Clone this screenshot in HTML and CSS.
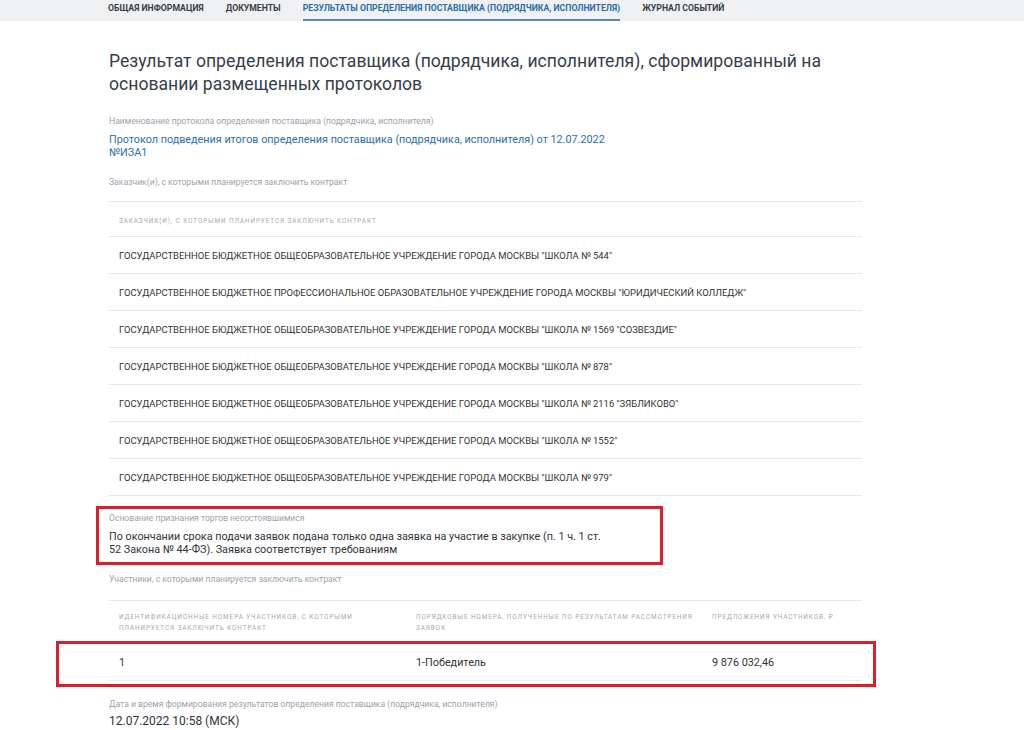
FILE: index.html
```html
<!DOCTYPE html>
<html lang="ru">
<head>
<meta charset="utf-8">
<title>Результат определения поставщика</title>
<link rel="stylesheet" href="styles.css">
</head>
<body>
<nav class="tabs">
  <a class="tab">ОБЩАЯ ИНФОРМАЦИЯ</a>
  <a class="tab">ДОКУМЕНТЫ</a>
  <a class="tab active">РЕЗУЛЬТАТЫ ОПРЕДЕЛЕНИЯ ПОСТАВЩИКА (ПОДРЯДЧИКА, ИСПОЛНИТЕЛЯ)</a>
  <a class="tab">ЖУРНАЛ СОБЫТИЙ</a>
</nav>
<main class="content">
  <h1 class="title">Результат определения поставщика (подрядчика, исполнителя), сформированный на основании размещенных протоколов</h1>

  <div class="label first">Наименование протокола определения поставщика (подрядчика, исполнителя)</div>
  <div class="link">Протокол подведения итогов определения поставщика (подрядчика, исполнителя) от 12.07.2022<br>№ИЗА1</div>

  <div class="label second">Заказчик(и), с которыми планируется заключить контракт</div>
  <div class="table customers">
    <div class="thead">ЗАКАЗЧИК(И), С КОТОРЫМИ ПЛАНИРУЕТСЯ ЗАКЛЮЧИТЬ КОНТРАКТ</div>
    <div class="row">ГОСУДАРСТВЕННОЕ БЮДЖЕТНОЕ ОБЩЕОБРАЗОВАТЕЛЬНОЕ УЧРЕЖДЕНИЕ ГОРОДА МОСКВЫ "ШКОЛА № 544"</div>
    <div class="row">ГОСУДАРСТВЕННОЕ БЮДЖЕТНОЕ ПРОФЕССИОНАЛЬНОЕ ОБРАЗОВАТЕЛЬНОЕ УЧРЕЖДЕНИЕ ГОРОДА МОСКВЫ "ЮРИДИЧЕСКИЙ КОЛЛЕДЖ"</div>
    <div class="row">ГОСУДАРСТВЕННОЕ БЮДЖЕТНОЕ ОБЩЕОБРАЗОВАТЕЛЬНОЕ УЧРЕЖДЕНИЕ ГОРОДА МОСКВЫ "ШКОЛА № 1569 "СОЗВЕЗДИЕ"</div>
    <div class="row">ГОСУДАРСТВЕННОЕ БЮДЖЕТНОЕ ОБЩЕОБРАЗОВАТЕЛЬНОЕ УЧРЕЖДЕНИЕ ГОРОДА МОСКВЫ "ШКОЛА № 878"</div>
    <div class="row">ГОСУДАРСТВЕННОЕ БЮДЖЕТНОЕ ОБЩЕОБРАЗОВАТЕЛЬНОЕ УЧРЕЖДЕНИЕ ГОРОДА МОСКВЫ "ШКОЛА № 2116 "ЗЯБЛИКОВО"</div>
    <div class="row">ГОСУДАРСТВЕННОЕ БЮДЖЕТНОЕ ОБЩЕОБРАЗОВАТЕЛЬНОЕ УЧРЕЖДЕНИЕ ГОРОДА МОСКВЫ "ШКОЛА № 1552"</div>
    <div class="row">ГОСУДАРСТВЕННОЕ БЮДЖЕТНОЕ ОБЩЕОБРАЗОВАТЕЛЬНОЕ УЧРЕЖДЕНИЕ ГОРОДА МОСКВЫ "ШКОЛА № 979"</div>
  </div>

  <div class="reason-box">
    <div class="label">Основание признания торгов несостоявшимися</div>
    <div class="reason">По окончании срока подачи заявок подана только одна заявка на участие в закупке (п. 1 ч. 1 ст.<br>52 Закона № 44-ФЗ). Заявка соответствует требованиям</div>
  </div>

  <div class="label third">Участники, с которыми планируется заключить контракт</div>
  <div class="table participants">
    <div class="thead grid3">
      <div class="cell">ИДЕНТИФИКАЦИОННЫЕ НОМЕРА УЧАСТНИКОВ, С КОТОРЫМИ ПЛАНИРУЕТСЯ ЗАКЛЮЧИТЬ КОНТРАКТ</div>
      <div class="cell">ПОРЯДКОВЫЕ НОМЕРА, ПОЛУЧЕННЫЕ ПО РЕЗУЛЬТАТАМ РАССМОТРЕНИЯ ЗАЯВОК</div>
      <div class="cell">ПРЕДЛОЖЕНИЯ УЧАСТНИКОВ, ₽</div>
    </div>
    <div class="winner-box">
      <div class="row grid3">
        <div class="cell">1</div>
        <div class="cell">1-Победитель</div>
        <div class="cell">9 876 032,46</div>
      </div>
    </div>
  </div>

  <div class="label fourth">Дата и время формирования результатов определения поставщика (подрядчика, исполнителя)</div>
  <div class="date">12.07.2022 10:58 (МСК)</div>
</main>
</body>
</html>
```

FILE: styles.css
```css
* { box-sizing: border-box; }
html, body { margin: 0; padding: 0; background: #fff; }
body {
  font-family: Roboto, "Noto Sans", "Liberation Sans", sans-serif;
  color: #333;
  width: 1024px;
  height: 730px;
  overflow: hidden;
}

.tabs {
  display: flex;
  gap: 22px;
  height: 21px;
  padding-left: 108px;
  background: #eff1f3;
}
.tab {
  font-size: 8.7px;
  font-weight: 700;
  color: #3a3f45;
  line-height: 17px;
  height: 21px;
  white-space: nowrap;
}
.tab.active {
  color: #2c6fa6;
  border-bottom: 2px solid #5a89aa;
}

.content {
  padding-left: 109px;
  width: 862px;
}

.title {
  margin: 29px 0 0 0;
  font-size: 17.6px;
  font-weight: 400;
  line-height: 23px;
  color: #353e4b;
  width: 740px;
}

.label {
  font-size: 8.6px;
  line-height: 12px;
  color: #9ba3ab;
  white-space: nowrap;
}
.label.first { margin-top: 19px; }
.label.second { margin-top: 17px; }
.label.third { margin-top: 8px; }
.label.fourth { margin-top: 11px; }

.link {
  margin-top: 6px;
  font-size: 10.8px;
  line-height: 13px;
  color: #2a70aa;
}

.table {
  margin-top: 13px;
  border-top: 1px solid #e6e9ec;
}
.thead {
  font-size: 6.4px;
  letter-spacing: 0.9px;
  color: #a3aab1;
  line-height: 11px;
}
.customers .thead {
  height: 35px;
  padding: 14px 0 0 10px;
  border-bottom: 1px solid #e6e9ec;
}
.customers .row {
  height: 37px;
  padding-left: 10px;
  display: flex;
  align-items: center;
  font-size: 9.45px;
  color: #333;
  border-bottom: 1px solid #e6e9ec;
  white-space: nowrap;
}

.reason-box {
  margin: 10px 0 0 -13px;
  width: 567px;
  border: 3px solid #d7202c;
  padding: 3px 0 6px 10px;
}
.reason {
  margin-top: 6px;
  font-size: 10.8px;
  line-height: 13px;
  color: #2f343a;
}

.participants {
  margin-top: 15px;
}
.grid3 {
  display: grid;
  grid-template-columns: 297px 296px 1fr;
}
.grid3 .cell { padding-left: 10px; }
.participants .thead {
  height: 40px;
  padding-top: 11px;
}
.winner-box {
  margin: 0 -14px 0 -53px;
  border: 3px solid #d7202c;
  padding: 0 11px 3px 50px;
}
.participants .row {
  height: 37px;
  align-items: center;
  font-size: 10.8px;
  color: #333;
  border-bottom: 1px solid #e9ecee;
}

.date {
  margin-top: 4px;
  font-size: 12px;
  line-height: 15px;
  color: #2f343a;
}
```
